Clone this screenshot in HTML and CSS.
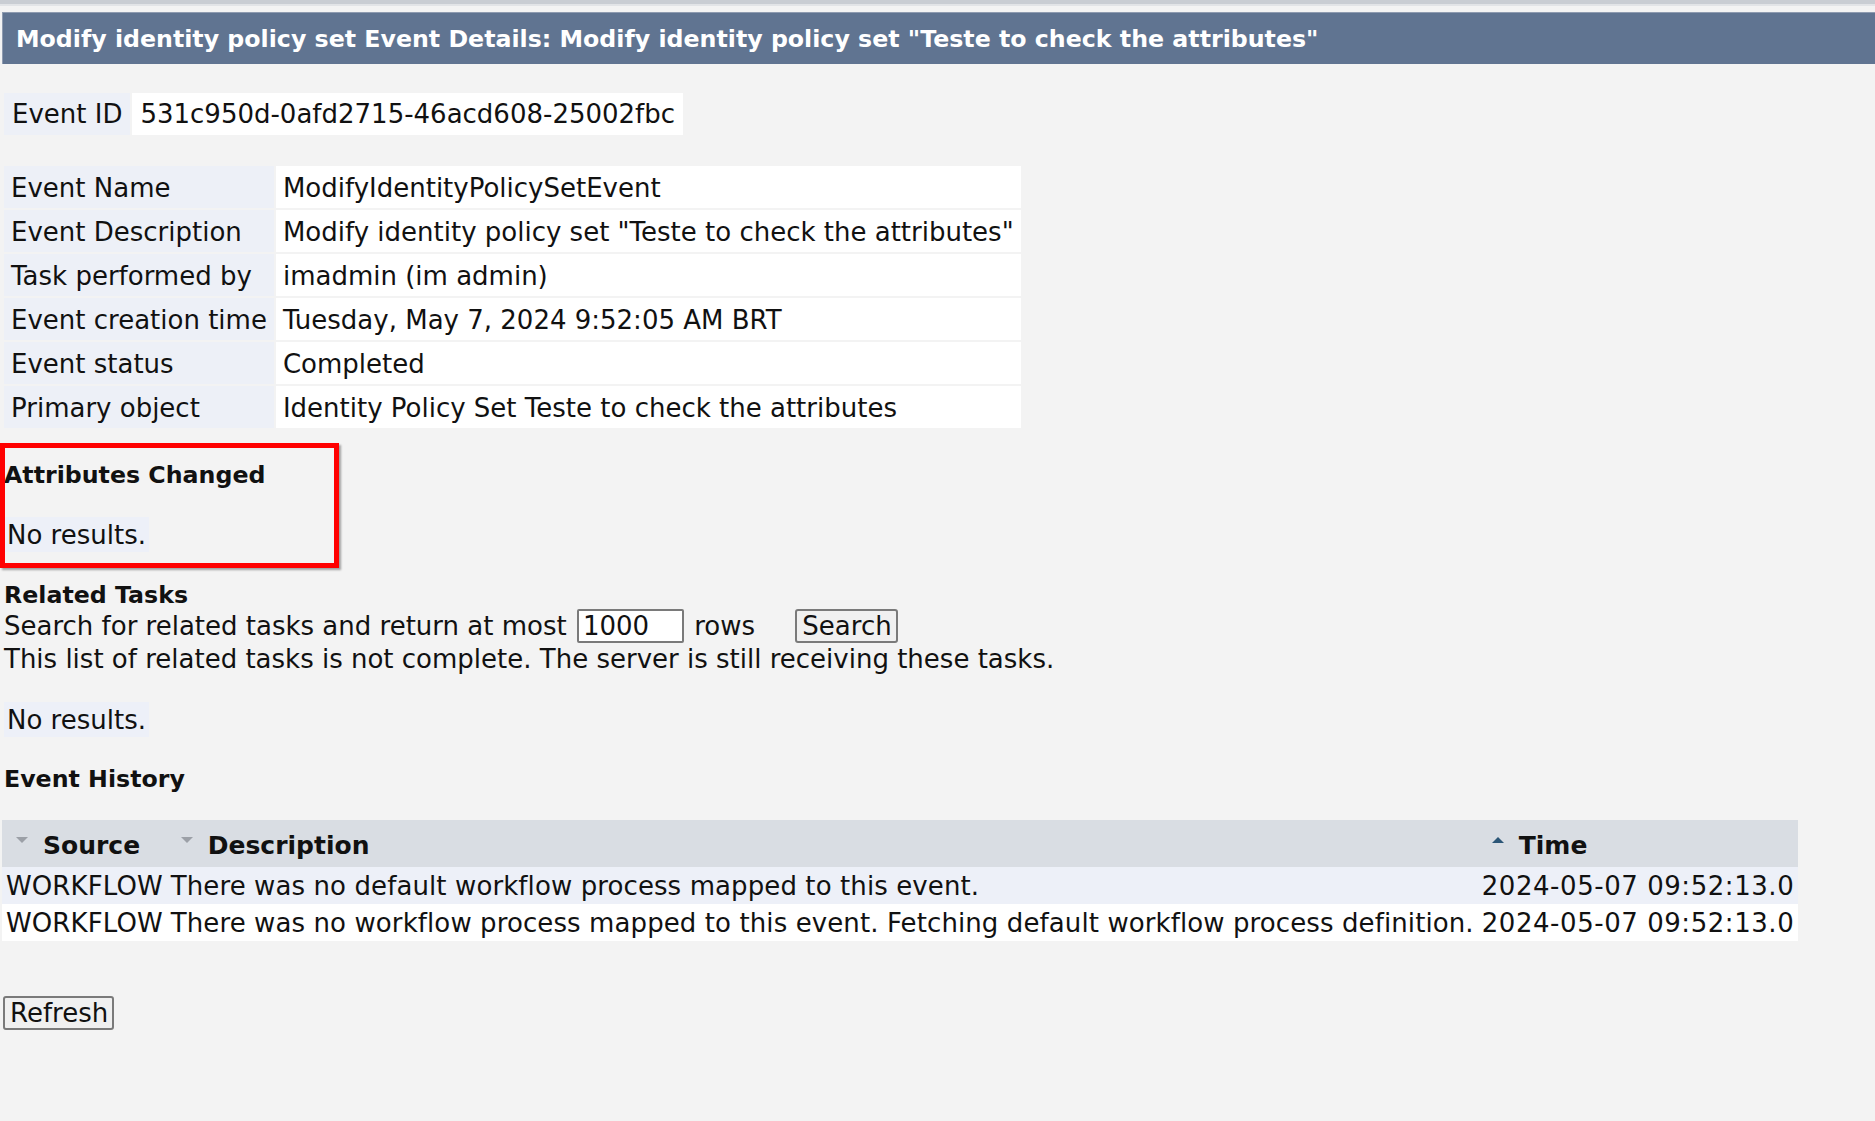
FILE: index.html
```html
<!DOCTYPE html>
<html lang="en">
<head>
<meta charset="utf-8">
<title>Modify identity policy set Event Details</title>
<link rel="stylesheet" href="styles.css">
</head>
<body>
<div class="topstrip"></div>
<div class="titlebar">Modify identity policy set Event Details: Modify identity policy set "Teste to check the attributes"</div>

<table class="kv idtable">
  <tr><td class="lbl">Event ID</td><td class="val">531c950d-0afd2715-46acd608-25002fbc</td></tr>
</table>

<table class="kv details">
  <tr><td class="lbl">Event Name</td><td class="val">ModifyIdentityPolicySetEvent</td></tr>
  <tr><td class="lbl">Event Description</td><td class="val">Modify identity policy set "Teste to check the attributes"</td></tr>
  <tr><td class="lbl">Task performed by</td><td class="val">imadmin (im admin)</td></tr>
  <tr><td class="lbl">Event creation time</td><td class="val">Tuesday, May 7, 2024 9:52:05 AM BRT</td></tr>
  <tr><td class="lbl">Event status</td><td class="val">Completed</td></tr>
  <tr><td class="lbl">Primary object</td><td class="val">Identity Policy Set Teste to check the attributes</td></tr>
</table>

<section class="attrs">
  <h2 class="heading">Attributes Changed</h2>
  <table class="noresults"><tr><td>No results.</td></tr></table>
  <div class="annot"></div>
</section>

<h2 class="heading related">Related Tasks</h2>
<div class="searchline">Search for related tasks and return at most <input class="rowsinput" type="text" value="1000"> rows <button class="btn searchbtn" type="button">Search</button></div>
<div class="notice">This list of related tasks is not complete. The server is still receiving these tasks.</div>
<table class="noresults second"><tr><td>No results.</td></tr></table>

<h2 class="heading history-h">Event History</h2>
<table class="history">
  <thead>
    <tr>
      <th class="c-src"><span class="sort"><svg width="12" height="6" viewBox="0 0 12 6"><path d="M0 0H12L6 6Z" fill="#9ca0a7"/></svg></span>Source</th>
      <th class="c-desc"><span class="sort"><svg width="12" height="6" viewBox="0 0 12 6"><path d="M0 0H12L6 6Z" fill="#9ca0a7"/></svg></span>Description</th>
      <th class="c-time"><span class="sort"><svg width="12" height="6" viewBox="0 0 12 6"><path d="M0 6H12L6 0Z" fill="#2c5677"/></svg></span>Time</th>
    </tr>
  </thead>
  <tbody>
    <tr class="odd"><td>WORKFLOW</td><td>There was no default workflow process mapped to this event.</td><td class="time">2024-05-07 09:52:13.0</td></tr>
    <tr class="even"><td>WORKFLOW</td><td>There was no workflow process mapped to this event. Fetching default workflow process definition.</td><td class="time">2024-05-07 09:52:13.0</td></tr>
  </tbody>
</table>

<div class="actions"><button class="btn refresh" type="button">Refresh</button></div>
</body>
</html>
```

FILE: styles.css
```css
html, body {
  margin: 0;
  padding: 0;
}
body {
  background: #f3f3f3;
  font-family: "DejaVu Sans", Verdana, sans-serif;
  font-size: 26px;
  line-height: 30px;
  color: #111;
  min-height: 1121px;
}

.topstrip {
  height: 4px;
  background: #c9cdd3;
  border-bottom: 2px solid #e2e4e7;
  margin-bottom: 6px;
}

.titlebar {
  margin-left: 2px;
  height: 51px;
  border-top: 1px solid #8e9bb0;
  border-left: 1px solid #8e9bb0;
  background: #607491;
  color: #fff;
  font-weight: bold;
  font-size: 23.7px;
  line-height: 53px;
  padding-left: 13px;
  white-space: nowrap;
  overflow: hidden;
}

table {
  border-collapse: separate;
  font-size: inherit;
}

.kv {
  border-spacing: 2px;
  margin-left: 2px;
}
.kv td {
  padding: 6px 7px;
  line-height: 30px;
  white-space: nowrap;
}
.kv .lbl {
  background: #edf0f7;
}
.kv .val {
  background: #ffffff;
}
.idtable {
  margin-top: 27px;
}
.idtable td {
  padding: 6px 8px;
}
.details {
  margin-top: 27px;
}
.details td {
  padding: 7px 7px 5px;
}

.attrs {
  position: relative;
  margin-top: 31px;
}
.heading {
  margin: 0;
  padding-left: 4px;
  font-size: 23.7px;
  line-height: 28px;
  font-weight: bold;
  color: #111;
}

.noresults {
  border-spacing: 2px;
  margin-left: 2px;
  margin-top: 26px;
}
.noresults td {
  background: #edf0f8;
  padding: 2.5px 3px 2.5px 3px;
  line-height: 30px;
}

.annot {
  position: absolute;
  left: 0;
  top: -18px;
  width: 329px;
  height: 115px;
  border: 5px solid #ff0000;
  box-shadow: 2px 2px 2px rgba(0, 0, 0, 0.35);
  pointer-events: none;
}

.related {
  margin-top: 27px;
}

.searchline {
  padding-left: 4px;
  line-height: 30px;
  white-space: nowrap;
}
.rowsinput {
  font-family: "DejaVu Sans", Verdana, sans-serif;
  font-size: 26px;
  width: 95px;
  height: 30px;
  padding: 0 4px;
  margin: 0 2px;
  border: 2px solid #7a7a7a;
  border-radius: 2px;
  background: #fff;
  color: #111;
  vertical-align: baseline;
  box-sizing: content-box;
}
.btn {
  font-family: "DejaVu Sans", Verdana, sans-serif;
  font-size: 26px;
  line-height: 28px;
  padding: 1px 4px 1px 5px;
  border: 2px solid #7a7a7a;
  border-radius: 3px;
  background: #f0f0f0;
  color: #111;
  vertical-align: baseline;
}
.searchbtn {
  margin-left: 32px;
}

.notice {
  padding-left: 4px;
  margin-top: 1px;
  line-height: 31px;
  white-space: nowrap;
}

.noresults.second {
  margin-top: 25px;
}

.history-h {
  margin-top: 26px;
}

.history {
  border-spacing: 0;
  margin-left: 2px;
  margin-top: 27px;
  white-space: nowrap;
}
.history th {
  background: #d9dde3;
  text-align: left;
  font-weight: bold;
  font-size: 25px;
  line-height: 30px;
  padding: 11px 4px 6px;
}
.sort {
  display: inline-block;
  width: 12px;
  height: 6px;
  margin-left: 10px;
  margin-right: 15px;
  vertical-align: top;
  margin-top: 6px;
  line-height: 0;
}
.sort svg {
  display: block;
}
.history td {
  padding: 3.5px 4px 3.5px;
  line-height: 30px;
  letter-spacing: 0.1px;
}
.history td.time {
  letter-spacing: 0.55px;
}
.history .odd td {
  background: #edf0f8;
}
.history .even td {
  background: #ffffff;
}

.actions {
  margin-top: 55px;
  padding-left: 3px;
}
```
